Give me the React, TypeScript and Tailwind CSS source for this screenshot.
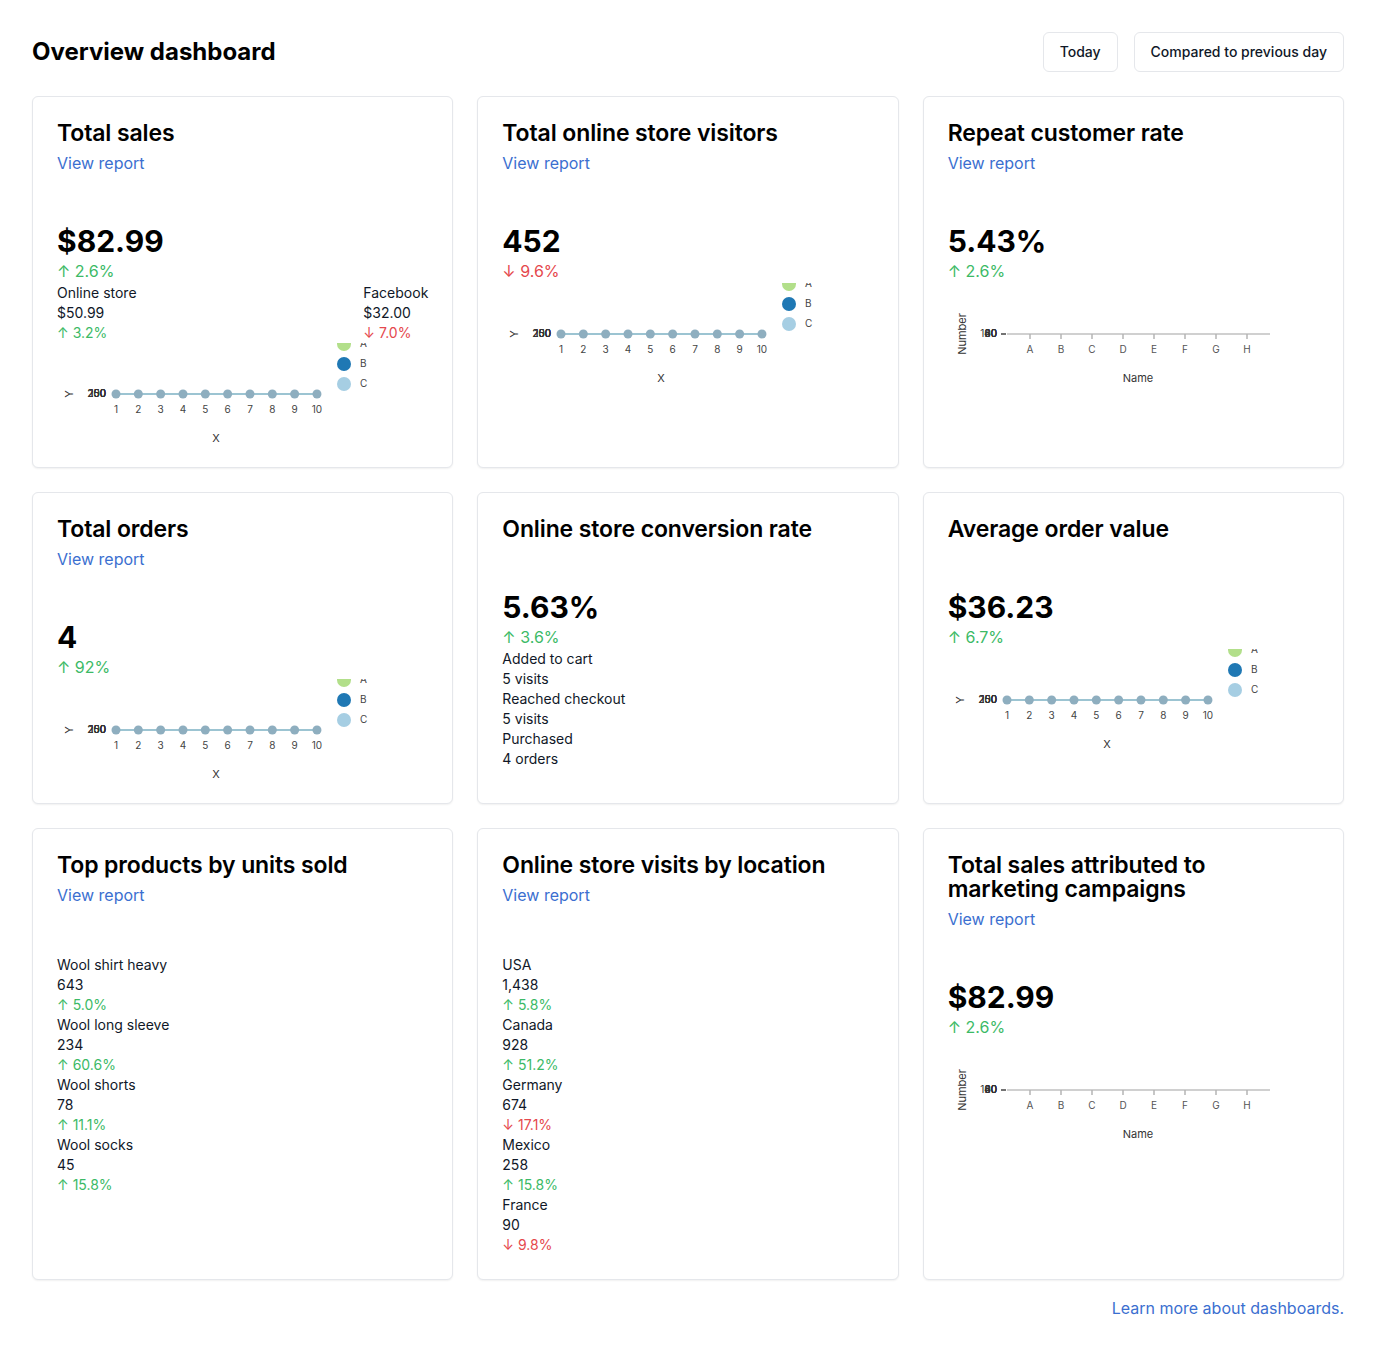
import React from "react";

const GREEN = "text-[#3cba66]";
const RED = "text-[#e5484d]";

function Delta({ v, up, small }: { v: string; up: boolean; small?: boolean }) {
  return (
    <div className={`${small ? "text-sm leading-5" : "text-base leading-6"} ${up ? GREEN : RED}`}>
      {up ? "↑" : "↓"} {v}
    </div>
  );
}

function LineChart() {
  const xs = Array.from({ length: 10 }, (_, i) => 59 + i * 22.33);
  return (
    <svg width={370} height={100} className="block shrink-0">
      <text x={13} y={51} transform="rotate(-90 13 51)" textAnchor="middle" dominantBaseline="middle" fontSize={11} fill="#333">
        Y
      </text>
      {["0", "50", "100", "150", "200", "250"].map((t) => (
        <text key={t} x={49} y={51} textAnchor="end" dominantBaseline="middle" fontSize={10} fill="#333">
          {t}
        </text>
      ))}
      <line x1={59} x2={260} y1={51} y2={51} stroke="#9cc4d2" strokeWidth={2} />
      {xs.map((x, i) => (
        <circle key={i} cx={x} cy={51} r={4.5} fill="#8eaebf" />
      ))}
      {xs.map((x, i) => (
        <text key={i} x={x} y={67} textAnchor="middle" dominantBaseline="middle" fontSize={10} fill="#444">
          {i + 1}
        </text>
      ))}
      <text x={159} y={96} textAnchor="middle" dominantBaseline="middle" fontSize={11} fill="#333">
        X
      </text>
      {[
        ["A", "#b2df8a"],
        ["B", "#1f78b4"],
        ["C", "#a6cee3"],
      ].map(([l, c], i) => (
        <g key={l}>
          <circle cx={287} cy={1 + i * 20} r={7} fill={c} />
          <text x={303} y={1 + i * 20} dominantBaseline="middle" fontSize={10} fill="#444">
            {l}
          </text>
        </g>
      ))}
    </svg>
  );
}

function BarChart() {
  const cats = ["A", "B", "C", "D", "E", "F", "G", "H"];
  return (
    <svg width={370} height={100} className="block shrink-0">
      <text x={15} y={51} transform="rotate(-90 15 51)" textAnchor="middle" dominantBaseline="middle" fontSize={11} fill="#333">
        Number
      </text>
      {["0", "20", "40", "60", "80", "100"].map((t) => (
        <text key={t} x={49} y={51} textAnchor="end" dominantBaseline="middle" fontSize={10} fill="#333">
          {t}
        </text>
      ))}
      <line x1={53} x2={58} y1={51} y2={51} stroke="#444" strokeWidth={1.5} />
      <line x1={59} x2={322} y1={51} y2={51} stroke="#d0d0d0" strokeWidth={2} />
      {cats.map((c, i) => (
        <g key={c}>
          <line x1={82 + i * 31} x2={82 + i * 31} y1={51} y2={56} stroke="#b5b5b5" strokeWidth={1.5} />
          <text x={82 + i * 31} y={67} textAnchor="middle" dominantBaseline="middle" fontSize={10} fill="#555">
            {c}
          </text>
        </g>
      ))}
      <text x={190} y={96} textAnchor="middle" dominantBaseline="middle" fontSize={11} fill="#333">
        Name
      </text>
    </svg>
  );
}

function Card({ title, report = true, children }: { title: string; report?: boolean; children: React.ReactNode }) {
  return (
    <div className="flex flex-col rounded-md border border-gray-200 bg-white p-6 shadow-[0_1px_2px_rgba(0,0,0,0.06)]">
      <h2 className="text-[23px] font-semibold leading-6 tracking-[-0.005em] text-black">{title}</h2>
      {report && <a className="mt-1.5 text-base leading-6 text-[#3b6fd0]">View report</a>}
      <div className="mt-12 flex flex-col">{children}</div>
    </div>
  );
}

function Big({ v }: { v: string }) {
  return <div className="text-[30px] font-bold leading-9 text-black">{v}</div>;
}

function Lines({ items }: { items: [string, string, string, boolean][] }) {
  return (
    <div className="flex flex-col text-sm leading-5 text-gray-900">
      {items.map(([n, v, d, up]) => (
        <React.Fragment key={n}>
          <div>{n}</div>
          <div>{v}</div>
          <Delta v={d} up={up} small />
        </React.Fragment>
      ))}
    </div>
  );
}

export default function App() {
  return (
    <div className="min-h-[1352px] bg-white p-8 font-['Inter','Noto_Sans',sans-serif] text-gray-900">
      <div className="flex h-10 items-center justify-between">
        <h1 className="text-2xl font-bold text-black">Overview dashboard</h1>
        <div className="flex gap-4">
          <button className="h-10 rounded-md border border-gray-200 bg-white px-4 text-sm font-medium text-gray-900">Today</button>
          <button className="h-10 rounded-md border border-gray-200 bg-white px-4 text-sm font-medium text-gray-900">
            Compared to previous day
          </button>
        </div>
      </div>

      <div className="mt-6 grid grid-cols-3 gap-6">
        <Card title="Total sales">
          <Big v="$82.99" />
          <Delta v="2.6%" up />
          <div className="flex justify-between text-sm leading-5 text-gray-900">
            <div>
              <div>Online store</div>
              <div>$50.99</div>
              <Delta v="3.2%" up small />
            </div>
            <div>
              <div>Facebook</div>
              <div>$32.00</div>
              <Delta v="7.0%" up={false} small />
            </div>
          </div>
          <LineChart />
        </Card>
        <Card title="Total online store visitors">
          <Big v="452" />
          <Delta v="9.6%" up={false} />
          <LineChart />
        </Card>
        <Card title="Repeat customer rate">
          <Big v="5.43%" />
          <Delta v="2.6%" up />
          <BarChart />
        </Card>

        <Card title="Total orders">
          <Big v="4" />
          <Delta v="92%" up />
          <LineChart />
        </Card>
        <Card title="Online store conversion rate" report={false}>
          <Big v="5.63%" />
          <Delta v="3.6%" up />
          <div className="flex flex-col text-sm leading-5 text-gray-900">
            <div>Added to cart</div>
            <div>5 visits</div>
            <div>Reached checkout</div>
            <div>5 visits</div>
            <div>Purchased</div>
            <div>4 orders</div>
          </div>
        </Card>
        <Card title="Average order value" report={false}>
          <Big v="$36.23" />
          <Delta v="6.7%" up />
          <LineChart />
        </Card>

        <Card title="Top products by units sold">
          <Lines
            items={[
              ["Wool shirt heavy", "643", "5.0%", true],
              ["Wool long sleeve", "234", "60.6%", true],
              ["Wool shorts", "78", "11.1%", true],
              ["Wool socks", "45", "15.8%", true],
            ]}
          />
        </Card>
        <Card title="Online store visits by location">
          <Lines
            items={[
              ["USA", "1,438", "5.8%", true],
              ["Canada", "928", "51.2%", true],
              ["Germany", "674", "17.1%", false],
              ["Mexico", "258", "15.8%", true],
              ["France", "90", "9.8%", false],
            ]}
          />
        </Card>
        <Card title="Total sales attributed to marketing campaigns">
          <Big v="$82.99" />
          <Delta v="2.6%" up />
          <BarChart />
        </Card>
      </div>

      <div className="mt-4 flex justify-end">
        <a className="text-base leading-6 text-[#3b6fd0]">Learn more about dashboards.</a>
      </div>
    </div>
  );
}
